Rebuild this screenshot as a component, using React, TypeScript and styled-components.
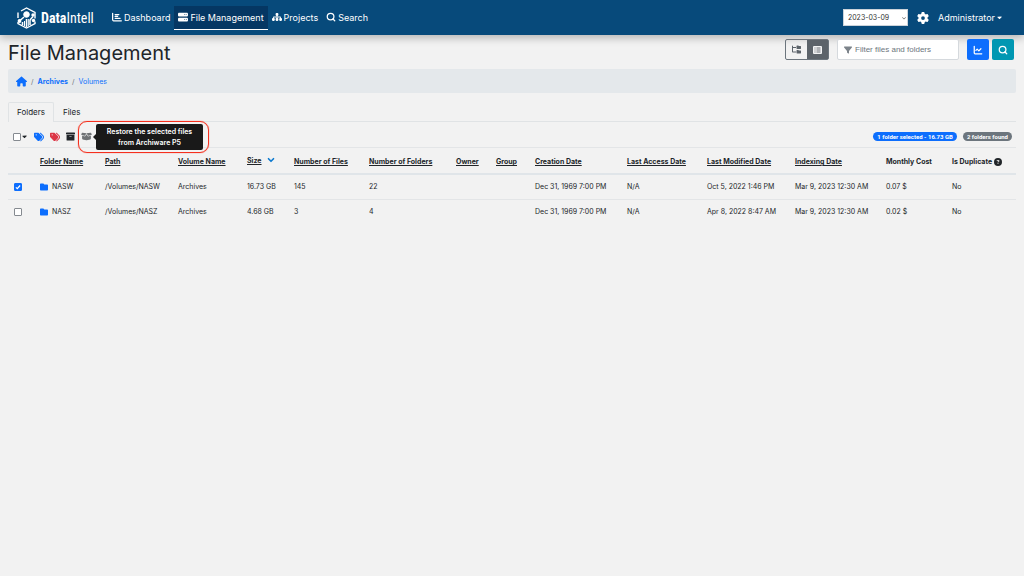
import React from 'react';
import styled, { createGlobalStyle, css } from 'styled-components';
import { FaArchive } from 'react-icons/fa';
import { FaServer, FaSitemap, FaGear, FaHouse, FaFilter, FaTags, FaBoxOpen, FaDatabase, FaFolder, FaCircleQuestion, FaChevronDown, FaFolderTree, FaCaretDown, FaChartBar } from 'react-icons/fa6';
import { LuChartLine, LuSearch, LuChevronDown } from 'react-icons/lu';

const GlobalStyle = createGlobalStyle`
  *, *::before, *::after { box-sizing: border-box; }
  body { margin: 0; background: #f2f2f2; color: #212529; font-family: Inter, "Liberation Sans", sans-serif; font-size: 8px; }
  button, input, select { font: inherit; color: inherit; margin: 0; }
  a { color: inherit; text-decoration: none; }
  svg { flex: none; display: block; }
`;

const Navbar = styled.header`
  display: flex;
  align-items: center;
  height: 35px;
  padding: 0 21px 0 16px;
  background: #074a7b;
  color: #fff;
  box-shadow: 0 3px 8px rgba(0, 0, 0, 0.25);
`;

const Brand = styled.a`
  display: flex;
  align-items: center;
  gap: 4px;
  width: 92px;
  font: 400 14px "Liberation Sans Narrow", "Roboto Condensed", Roboto, sans-serif;
`;

const NavLinks = styled.nav`
  display: flex;
  flex: 1;
`;

const NavLink = styled.a<{ $active?: boolean }>`
  display: flex;
  align-items: center;
  gap: 2px;
  height: 24px;
  padding: 0 4px;
  font-size: 9px;
  border-bottom: 1px solid transparent;
  ${(p) => p.$active && css`
    background: #053763;
    border-color: #fff;
  `}
`;

const NavTools = styled.div`
  display: flex;
  align-items: center;
  gap: 9px;
`;

const SelectWrap = styled.div`
  position: relative;
  svg { position: absolute; right: 2px; top: 7px; color: #444; }
`;

const DateSelect = styled.select`
  appearance: none;
  display: block;
  width: 65px;
  height: 17px;
  padding: 0 4px;
  border: 1px solid #ccd3da;
  border-radius: 0;
  background: #fff;
  color: #333;
  font-size: 7px;
`;

const PlainButton = styled.button`
  display: flex;
  align-items: center;
  gap: 1px;
  padding: 0;
  border: 0;
  background: none;
`;

const UserButton = styled(PlainButton)`
  font-size: 9px;
`;

const Main = styled.main`
  padding: 0 8px;
`;

const TitleRow = styled.div`
  display: flex;
  align-items: center;
  justify-content: space-between;
  height: 34px;
  padding: 0 2px 0 0;
`;

const Title = styled.h1`
  margin: 0;
  padding-top: 2px;
  font-size: 20px;
  font-weight: 400;
`;

const Actions = styled.div`
  display: flex;
  align-items: center;
  height: 21px;
  margin-bottom: 5px;
`;

const ViewToggle = styled.div`
  display: flex;
  width: 44px;
  height: 21px;
  margin-right: 8px;
  border: 1px solid #6c757d;
  border-radius: 2px;
`;

const ViewButton = styled.button<{ $on?: boolean }>`
  display: flex;
  flex: 1;
  align-items: center;
  justify-content: center;
  padding: 0;
  border: 0;
  background: ${(p) => (p.$on ? '#5c636a' : 'transparent')};
  color: ${(p) => (p.$on ? '#fff' : '#5c636a')};
`;

const FilterBox = styled.label`
  display: flex;
  align-items: center;
  gap: 3px;
  width: 122px;
  height: 21px;
  margin-right: 8px;
  padding: 0 6px;
  border: 1px solid #d5d9dd;
  border-radius: 2px;
  background: #fff;
  color: #7c838a;
`;

const FilterInput = styled.input`
  flex: 1;
  min-width: 0;
  padding: 0;
  border: 0;
  background: none;
  font-family: "Liberation Sans", Arial, sans-serif;
  &::placeholder { color: #6c757d; opacity: 1; }
`;

const SquareButton = styled.button<{ $color: string }>`
  display: flex;
  align-items: center;
  justify-content: center;
  width: 22px;
  height: 21px;
  margin-right: 3px;
  padding: 0;
  border: 0;
  border-radius: 2px;
  background: ${(p) => p.$color};
  color: #fff;
  &:last-child { margin-right: 0; }
`;

const Breadcrumb = styled.nav`
  display: flex;
  align-items: center;
  gap: 4px;
  height: 24px;
  padding: 0 8px;
  border-radius: 2px;
  background: #e4e8eb;
  color: #6c757d;
  font-size: 7px;
  a { color: #0d6efd; }
`;

const Tabs = styled.div`
  display: flex;
  height: 29px;
  padding-top: 9px;
  border-bottom: 1px solid #e0e3e5;
`;

const Tab = styled.button<{ $active?: boolean }>`
  height: 20px;
  padding: 0 8px 2px;
  border: 1px solid transparent;
  border-bottom: 0;
  border-radius: 2px 2px 0 0;
  background: none;
  ${(p) => p.$active && css`
    border-color: #e0e3e5;
    background: #f2f2f2;
  `}
`;

const Toolbar = styled.div`
  display: flex;
  align-items: center;
  justify-content: space-between;
  height: 26px;
  padding: 4px 4px 0 5px;
  border-bottom: 1px solid #e3e5e7;
`;

const ToolGroup = styled.div`
  display: flex;
  align-items: center;
  gap: 6px;
`;

const CheckMenu = styled.div`
  display: flex;
  align-items: center;
`;

const CheckBox = styled.input`
  appearance: none;
  display: block;
  width: 8px;
  height: 8px;
  border: 1px solid #858a90;
  border-radius: 1px;
  background: #fff center / 6px 6px no-repeat;
  &:checked {
    border-color: #0d6efd;
    background-color: #0d6efd;
    background-image: url("data:image/svg+xml,%3Csvg xmlns='http://www.w3.org/2000/svg' viewBox='0 0 10 10'%3E%3Cpath d='M1.5 5.5l2.3 2.3L8.5 2.5' fill='none' stroke='white' stroke-width='2'/%3E%3C/svg%3E");
  }
`;

const ToolButton = styled(PlainButton)<{ $color: string }>`
  color: ${(p) => p.$color};
`;

const TipAnchor = styled.div`
  position: relative;
`;

const Tooltip = styled.div`
  position: absolute;
  z-index: 2;
  left: 15px;
  top: 50%;
  transform: translateY(-50%);
  width: 107px;
  padding: 2px 4px;
  border-radius: 2px;
  background: #191919;
  color: #fff;
  font-size: 7px;
  font-weight: 600;
  line-height: 11px;
  text-align: center;
  &::before {
    content: '';
    position: absolute;
    left: -3px;
    top: 50%;
    margin-top: -3px;
    border: 3px solid transparent;
    border-left: 0;
    border-right-color: #191919;
  }
`;

const Highlight = styled.div`
  position: absolute;
  z-index: 3;
  left: -3px;
  top: 50%;
  transform: translateY(-50%);
  width: 131px;
  height: 32px;
  border: 1px solid #f5301e;
  border-radius: 9px;
  box-shadow: 0 0 1px #f5301e;
  pointer-events: none;
`;

const Badge = styled.span<{ $color: string }>`
  padding: 0 4px;
  border-radius: 5px;
  background: ${(p) => p.$color};
  color: #fff;
  font-family: Roboto, sans-serif;
  font-size: 6px;
  font-weight: 700;
  line-height: 9px;
`;

const Table = styled.table`
  width: 100%;
  table-layout: fixed;
  border-collapse: collapse;
  font-size: 7px;
  white-space: nowrap;
  th, td { padding: 0 4px; text-align: left; }
  th { height: 26px; padding-top: 2px; font-weight: 700; border-bottom: 2px solid #e0e5e9; }
  td { height: 25px; }
  tbody tr + tr td { border-top: 1px solid #e3e5e7; }
  th:first-child, td:first-child { padding-left: 6px; }
`;

const SortLink = styled.a`
  text-decoration: underline;
`;

const Inline = styled.span<{ $gap: number }>`
  display: flex;
  align-items: center;
  gap: ${(p) => p.$gap}px;
`;

const SortedHeading = styled(Inline)`
  padding-bottom: 3px;
`;

const widths = [28, 65, 73, 69, 47, 75, 87, 40, 39, 92, 80, 88, 91, 66, 68];
const headings = ['Folder Name', 'Path', 'Volume Name', 'Size', 'Number of Files', 'Number of Folders', 'Owner', 'Group', 'Creation Date', 'Last Access Date', 'Last Modified Date', 'Indexing Date'];
const rows = [
  { name: 'NASW', checked: true, cells: ['/Volumes/NASW', 'Archives', '16.73 GB', '145', '22', '', '', 'Dec 31, 1969 7:00 PM', 'N/A', 'Oct 5, 2022 1:46 PM', 'Mar 9, 2023 12:30 AM', '0.07 $', 'No'] },
  { name: 'NASZ', checked: false, cells: ['/Volumes/NASZ', 'Archives', '4.68 GB', '3', '4', '', '', 'Dec 31, 1969 7:00 PM', 'N/A', 'Apr 8, 2022 8:47 AM', 'Mar 9, 2023 12:30 AM', '0.02 $', 'No'] },
];

const Logo = () => (
  <svg width="21" height="22" viewBox="0 0 21 22" fill="none" stroke="#fff">
    <path d="M5 4 10.500 1 19 5.500v6M19 14.500v2L10.500 21 2 16.500V15M2 11V5.500" strokeWidth="1.400" />
    <circle cx="10.500" cy="7.500" r="2.800" fill="#fff" strokeWidth="1" />
    <path d="M6.500 18v-3M10.500 20v-8M14 18v-5l3-3.500M8 10l-4 3.500" strokeWidth="1.500" />
    <path d="M8.500 19v-5M12.300 19v-7" strokeWidth="1" />
    <g fill="#fff" stroke="none"><circle cx="3.500" cy="14" r="1.900" /><circle cx="17.500" cy="13.500" r="1.700" /><circle cx="17" cy="8" r="1.700" /></g>
  </svg>
);

const ListIcon = () => (
  <svg width="9" height="8" viewBox="0 0 9 8">
    <rect width="9" height="8" rx="1" fill="#f2f3f4" />
    <path d="M1.500 2h1M1.500 4h1M1.500 6h1M3.500 2h4M3.500 4h4M3.500 6h4" stroke="#5c636a" strokeWidth="0.900" />
  </svg>
);

export default function App() {
  return (
    <>
      <GlobalStyle />
      <Navbar>
        <Brand href="#"><Logo /><span><b>Data</b>Intell</span></Brand>
        <NavLinks>
          <NavLink href="#"><FaChartBar size={10} />Dashboard</NavLink>
          <NavLink href="#" $active><FaServer size={10} />File Management</NavLink>
          <NavLink href="#"><FaSitemap size={10} />Projects</NavLink>
          <NavLink href="#"><LuSearch size={10} strokeWidth={3} />Search</NavLink>
        </NavLinks>
        <NavTools>
          <SelectWrap>
            <DateSelect aria-label="Indexing date"><option>2023-03-09</option></DateSelect>
            <FaChevronDown size={4} />
          </SelectWrap>
          <PlainButton aria-label="Settings"><FaGear size={12} /></PlainButton>
          <UserButton>Administrator<FaCaretDown size={7} /></UserButton>
        </NavTools>
      </Navbar>
      <Main>
        <TitleRow>
          <Title>File Management</Title>
          <Actions>
            <ViewToggle>
              <ViewButton aria-label="Tree view"><FaFolderTree size={9} /></ViewButton>
              <ViewButton aria-label="List view" $on><ListIcon /></ViewButton>
            </ViewToggle>
            <FilterBox><FaFilter size={8} /><FilterInput aria-label="Filter" placeholder="Filter files and folders" /></FilterBox>
            <SquareButton aria-label="Charts" $color="#0d6efd"><LuChartLine size={10} strokeWidth={3} /></SquareButton>
            <SquareButton aria-label="Search" $color="#0097b2"><LuSearch size={10} strokeWidth={3} /></SquareButton>
          </Actions>
        </TitleRow>
        <Breadcrumb>
          <a href="#" aria-label="Home"><FaHouse size={11} /></a>/<a href="#"><b>Archives</b></a>/<a href="#">Volumes</a>
        </Breadcrumb>
        <Tabs>
          <Tab $active>Folders</Tab>
          <Tab>Files</Tab>
        </Tabs>
        <Toolbar>
          <ToolGroup>
            <CheckMenu>
              <CheckBox type="checkbox" aria-label="Select all" />
              <PlainButton aria-label="Selection menu"><FaCaretDown size={7} /></PlainButton>
            </CheckMenu>
            <ToolButton aria-label="Add tags" $color="#0d6efd"><FaTags size={10} /></ToolButton>
            <ToolButton aria-label="Remove tags" $color="#dc3545"><FaTags size={10} /></ToolButton>
            <ToolButton aria-label="Archive" $color="#212529"><FaArchive size={9} /></ToolButton>
            <TipAnchor>
              <ToolButton aria-label="Restore" $color="#6f7275"><FaBoxOpen size={11} /></ToolButton>
              <Tooltip role="tooltip">Restore the selected files from Archiware P5</Tooltip>
              <Highlight />
            </TipAnchor>
            <ToolButton aria-label="Storage" $color="#052c65"><FaDatabase size={9} /></ToolButton>
          </ToolGroup>
          <ToolGroup>
            <Badge $color="#0d6efd">1 folder selected - 16.73 GB</Badge>
            <Badge $color="#6c757d">2 folders found</Badge>
          </ToolGroup>
        </Toolbar>
        <Table>
          <colgroup>{widths.map((w, i) => <col key={i} style={{ width: w }} />)}</colgroup>
          <thead>
            <tr>
              <th />
              {headings.map((h) => (
                <th key={h}>
                  {h === 'Size'
                    ? <SortedHeading $gap={4}><SortLink href="#">Size</SortLink><LuChevronDown size={10} strokeWidth={4} color="#0d7ad0" /></SortedHeading>
                    : <SortLink href="#">{h}</SortLink>}
                </th>
              ))}
              <th>Monthly Cost</th>
              <th><Inline $gap={2}>Is Duplicate<FaCircleQuestion size={8} /></Inline></th>
            </tr>
          </thead>
          <tbody>
            {rows.map((r) => (
              <tr key={r.name}>
                <td><CheckBox type="checkbox" defaultChecked={r.checked} aria-label={r.name} /></td>
                <td><Inline $gap={4}><FaFolder size={8} color="#0d6efd" />{r.name}</Inline></td>
                {r.cells.map((c, i) => <td key={i}>{c}</td>)}
              </tr>
            ))}
          </tbody>
        </Table>
      </Main>
    </>
  );
}
